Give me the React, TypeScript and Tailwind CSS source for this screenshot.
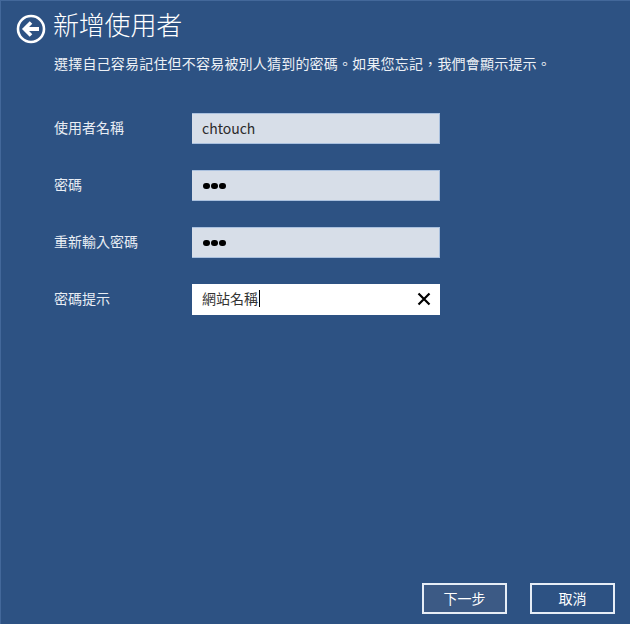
const FONT = "[font-family:'Noto_Sans_CJK_TC',sans-serif]";

function BackIcon() {
  return (
    <svg width="30" height="30" viewBox="0 0 30 30" fill="none" className="shrink-0">
      <circle cx="15" cy="15" r="13" stroke="white" strokeWidth="2.6" />
      <path d="M23 15H9" stroke="white" strokeWidth="4" />
      <path d="M15 8.5L8.5 15L15 21.5" stroke="white" strokeWidth="3.6" />
    </svg>
  );
}

function Dots() {
  return (
    <div className="ml-[1px] mt-[1px] flex gap-[1.5px]">
      <span className="h-[6.5px] w-[6.5px] rounded-full bg-black" />
      <span className="h-[6.5px] w-[6.5px] rounded-full bg-black" />
      <span className="h-[6.5px] w-[6.5px] rounded-full bg-black" />
    </div>
  );
}

function Row({ label, children, active }: { label: string; children: React.ReactNode; active?: boolean }) {
  return (
    <div className="flex h-[31px] items-center">
      <div className="w-[138px] -mt-[3px] text-[14px] leading-none text-[#e8edf4]">{label}</div>
      <div
        className={
          "flex h-[31px] w-[248px] items-center pl-[10px] pr-[8px] " +
          (active ? "bg-white" : "bg-[#d7dee8] border-t border-r border-b border-[#a9c0de]")
        }
      >
        {children}
      </div>
    </div>
  );
}

export default function App() {
  return (
    <div lang="zh-TW" className={"relative flex h-[624px] w-[630px] flex-col overflow-hidden border-t border-l border-[#43689a] bg-[#2d5283] " + FONT}>
      <div className="flex h-[30px] items-center gap-[7px] pl-[15px] mt-[13px]">
        <BackIcon />
        <h1 className="-mt-[10px] text-[26px] font-light leading-none tracking-[-0.2px] text-white">新增使用者</h1>
      </div>
      <p className="ml-[53px] mt-[11px] text-[14px] leading-[16px] tracking-[0.2px] text-[#edf1f6]">
        選擇自己容易記住但不容易被別人猜到的密碼。如果您忘記，我們會顯示提示。
      </p>
      <div className="ml-[53px] mt-[42px] flex flex-col gap-[26px]">
        <Row label="使用者名稱">
          <span className="-mt-[2px] text-[14px] leading-none text-[#2b2b2b]">chtouch</span>
        </Row>
        <Row label="密碼">
          <Dots />
        </Row>
        <Row label="重新輸入密碼">
          <Dots />
        </Row>
        <Row label="密碼提示" active>
          <span className="-mt-[3px] text-[14px] leading-none text-[#333]">網站名稱</span>
          <span className="-mt-[2px] ml-[1px] h-[17px] w-px bg-black" />
          <svg width="16" height="16" viewBox="0 0 16 16" className="ml-auto -mt-[1px]" fill="none">
            <path d="M2.5 2.5L13.5 13.5M13.5 2.5L2.5 13.5" stroke="black" strokeWidth="2.2" />
          </svg>
        </Row>
      </div>
      <div className="mt-auto mb-[10px] mr-[15px] flex justify-end gap-[23px]">
        <button className="h-[31px] w-[85px] border-2 border-[#e6edf6] bg-[#3c5a85] text-[14px] text-white">下一步</button>
        <button className="h-[31px] w-[85px] border-2 border-[#e6edf6] text-[14px] text-white">取消</button>
      </div>
    </div>
  );
}
